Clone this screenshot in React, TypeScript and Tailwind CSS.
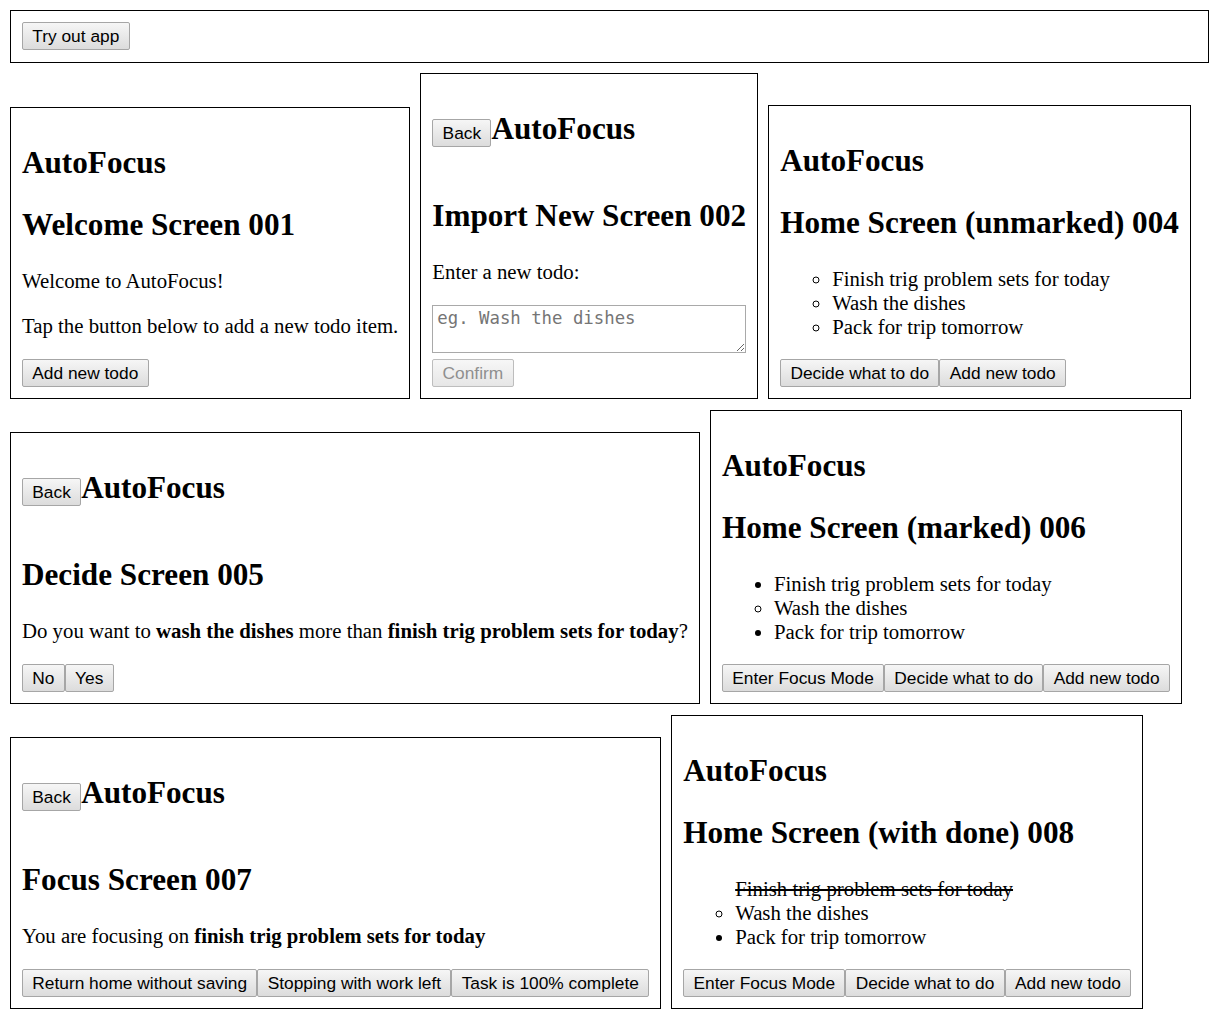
import React from "react";

const btnBase =
  "inline-block border rounded-[2px] bg-linear-to-b px-[9.3px] py-[3px] text-[17.33px] leading-[20px] whitespace-nowrap font-['Liberation_Sans',Arial,sans-serif]";

function Btn({ children, disabled }: { children: React.ReactNode; disabled?: boolean }) {
  return (
    <button
      disabled={disabled}
      className={
        disabled
          ? btnBase + " border-[#bdbdbd] from-[#f7f7f7] to-[#e6e6e6] text-[#8f8f8f]"
          : btnBase + " border-[#a6a6a6] from-[#f6f6f6] to-[#dcdcdc] text-black"
      }
    >
      {children}
    </button>
  );
}

function Box({ children }: { children: React.ReactNode }) {
  return <div className="border border-black bg-white p-[11px]">{children}</div>;
}

function H2({ children, afterBack }: { children: React.ReactNode; afterBack?: boolean }) {
  return (
    <h2
      className={
        (afterBack ? "mt-[25px] mb-[26px]" : "my-[26px]") +
        " text-[31.2px] font-bold leading-[normal] whitespace-nowrap"
      }
    >
      {children}
    </h2>
  );
}

function P({ children }: { children: React.ReactNode }) {
  return <p className="my-[20.6px] text-[20.8px] leading-[normal] whitespace-nowrap">{children}</p>;
}

function Buttons({ children }: { children: React.ReactNode }) {
  return <div className="flex">{children}</div>;
}

function BackHeader() {
  return (
    <div className="flex items-baseline">
      <Btn>Back</Btn>
      <H2>AutoFocus</H2>
    </div>
  );
}

function List({ items }: { items: { text: string; kind: "disc" | "circle" | "done" }[] }) {
  return (
    <ul className="mt-[21px] mb-[20px] pl-[52px] text-[20.8px] leading-[normal]">
      {items.map((it, i) => (
        <li
          key={i}
          className={
            it.kind === "disc"
              ? "list-disc whitespace-nowrap"
              : it.kind === "circle"
              ? "list-[circle] whitespace-nowrap"
              : "list-none line-through whitespace-nowrap"
          }
        >
          {it.text}
        </li>
      ))}
    </ul>
  );
}

const T1 = "Finish trig problem sets for today";
const T2 = "Wash the dishes";
const T3 = "Pack for trip tomorrow";

export default function App() {
  return (
    <div className="min-h-screen bg-white p-[10px] text-black font-['Liberation_Serif','Times_New_Roman',serif]">
      <div className="mr-[11px] flex border border-black p-[11px] pb-[12px]">
        <Btn>Try out app</Btn>
      </div>

      <div className="mt-[10px] flex items-end gap-[10px]">
        <Box>
          <H2>AutoFocus</H2>
          <H2>Welcome Screen 001</H2>
          <P>Welcome to AutoFocus!</P>
          <P>Tap the button below to add a new todo item.</P>
          <Buttons>
            <Btn>Add new todo</Btn>
          </Buttons>
        </Box>
        <Box>
          <BackHeader />
          <H2 afterBack>Import New Screen 002</H2>
          <P>Enter a new todo:</P>
          <div className="pb-[6px]">
            <textarea
              placeholder="eg. Wash the dishes"
              className="block h-[48px] w-full border border-[#a9a9a9] bg-white px-[4px] py-[2px] text-[17.33px] leading-[normal] font-['DejaVu_Sans_Mono',monospace] placeholder:text-[#757575]"
            />
          </div>
          <Buttons>
            <Btn disabled>Confirm</Btn>
          </Buttons>
        </Box>
        <Box>
          <H2>AutoFocus</H2>
          <H2>Home Screen (unmarked) 004</H2>
          <List
            items={[
              { text: T1, kind: "circle" },
              { text: T2, kind: "circle" },
              { text: T3, kind: "circle" },
            ]}
          />
          <Buttons>
            <Btn>Decide what to do</Btn>
            <Btn>Add new todo</Btn>
          </Buttons>
        </Box>
      </div>

      <div className="mt-[11px] flex items-end gap-[10px]">
        <Box>
          <BackHeader />
          <H2 afterBack>Decide Screen 005</H2>
          <P>
            Do you want to <b>wash the dishes</b> more than <b>finish trig problem sets for today</b>?
          </P>
          <Buttons>
            <Btn>No</Btn>
            <Btn>Yes</Btn>
          </Buttons>
        </Box>
        <Box>
          <H2>AutoFocus</H2>
          <H2>Home Screen (marked) 006</H2>
          <List
            items={[
              { text: T1, kind: "disc" },
              { text: T2, kind: "circle" },
              { text: T3, kind: "disc" },
            ]}
          />
          <Buttons>
            <Btn>Enter Focus Mode</Btn>
            <Btn>Decide what to do</Btn>
            <Btn>Add new todo</Btn>
          </Buttons>
        </Box>
      </div>

      <div className="mt-[11px] flex items-end gap-[10px]">
        <Box>
          <BackHeader />
          <H2 afterBack>Focus Screen 007</H2>
          <P>
            You are focusing on <b>finish trig problem sets for today</b>
          </P>
          <Buttons>
            <Btn>Return home without saving</Btn>
            <Btn>Stopping with work left</Btn>
            <Btn>Task is 100% complete</Btn>
          </Buttons>
        </Box>
        <Box>
          <H2>AutoFocus</H2>
          <H2>Home Screen (with done) 008</H2>
          <List
            items={[
              { text: T1, kind: "done" },
              { text: T2, kind: "circle" },
              { text: T3, kind: "disc" },
            ]}
          />
          <Buttons>
            <Btn>Enter Focus Mode</Btn>
            <Btn>Decide what to do</Btn>
            <Btn>Add new todo</Btn>
          </Buttons>
        </Box>
      </div>
    </div>
  );
}
